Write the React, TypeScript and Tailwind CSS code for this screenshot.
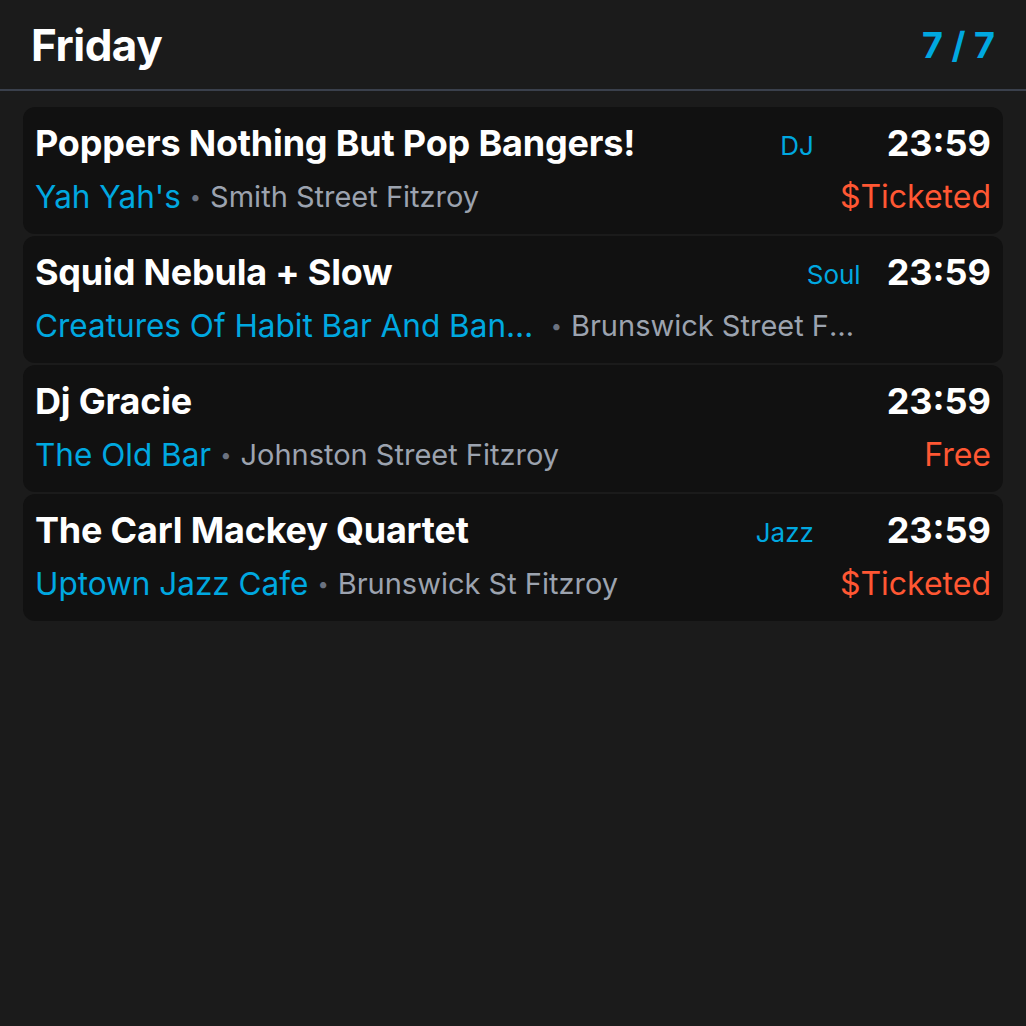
import React from "react";

type Ev = { title: string; tag?: string; venue: string; address: string; time: string; price?: string };

const events: Ev[] = [
  { title: "Poppers Nothing But Pop Bangers!", tag: "DJ", venue: "Yah Yah's", address: "Smith Street Fitzroy", time: "23:59", price: "$Ticketed" },
  { title: "Squid Nebula + Slow", tag: "Soul", venue: "Creatures Of Habit Bar And Band Room", address: "Brunswick Street Fitzroy", time: "23:59" },
  { title: "Dj Gracie", venue: "The Old Bar", address: "Johnston Street Fitzroy", time: "23:59", price: "Free" },
  { title: "The Carl Mackey Quartet", tag: "Jazz", venue: "Uptown Jazz Cafe", address: "Brunswick St Fitzroy", time: "23:59", price: "$Ticketed" },
];

export default function App() {
  return (
    <div
      className="min-h-[1026px] w-full bg-[#1b1b1b] text-white"
      style={{ fontFamily: "Inter, 'Noto Sans', sans-serif" }}
    >
      <div className="flex h-[91px] items-center justify-between border-b-2 border-[#3a404c] pl-[31px] pr-[31px]">
        <div className="text-[44px] font-bold leading-none tracking-[-0.5px]">Friday</div>
        <div className="text-[36px] font-bold leading-none text-[#00a8e0]">7 / 7</div>
      </div>
      <div className="flex flex-col gap-[2px] px-[23px] pt-[16px]">
        {events.map((e, i) => (
          <div key={i} className="flex items-start rounded-[12px] bg-[#111111] pl-[12px] pr-[12px] pt-[14px] pb-[15px]">
            <div className="flex min-w-0 flex-1 flex-col gap-[8px]">
              <div className="flex h-[45px] items-center justify-between gap-4">
                <div className="truncate text-[36px] font-bold leading-[45px] tracking-[-0.2px]">{e.title}</div>
                {e.tag && <div className="shrink-0 pt-[4px] text-[26px] leading-none text-[#00a8e0]">{e.tag}</div>}
              </div>
              <div className="flex h-[45px] min-w-0 items-center whitespace-nowrap">
                <span className="truncate text-[31.5px] leading-[45px] text-[#00a8e0]">{e.venue}</span>
                <span className="mx-[9px] shrink-0 text-[20px] leading-none text-[#6b7280]">•</span>
                <span className="truncate text-[29px] leading-[45px] text-[#9ca3af]">{e.address}</span>
              </div>
            </div>
            <div className="ml-[26px] flex shrink-0 flex-col items-end gap-[8px]">
              <div className="text-[36px] font-bold leading-[45px]">{e.time}</div>
              {e.price && <div className="text-[32px] leading-[45px] text-[#ff5733]">{e.price}</div>}
            </div>
          </div>
        ))}
      </div>
    </div>
  );
}
